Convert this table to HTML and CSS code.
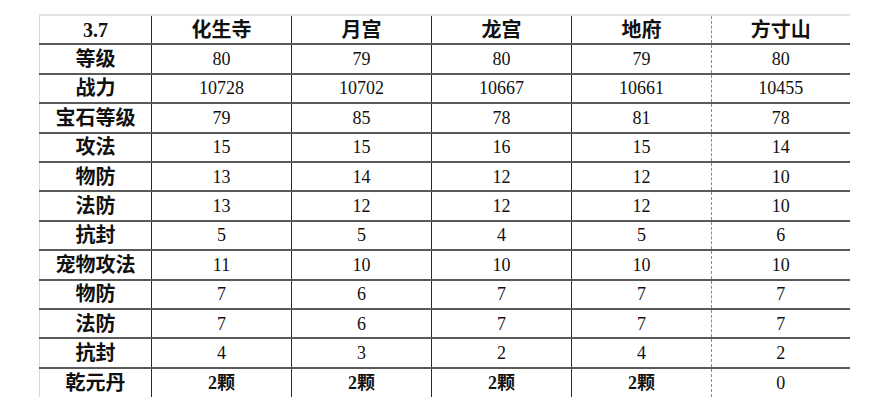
FILE: index.html
```html
<!DOCTYPE html>
<html lang="zh-CN">
<head>
<meta charset="utf-8">
<title>3.7</title>
<link rel="stylesheet" href="styles.css">
</head>
<body>
<table class="stats">
  <colgroup>
    <col class="c-label"><col class="c-val"><col class="c-val"><col class="c-val"><col class="c-val"><col class="c-last">
  </colgroup>
  <thead>
    <tr class="head"><th>3.7</th><th>化生寺</th><th>月宫</th><th>龙宫</th><th>地府</th><th class="last">方寸山</th></tr>
  </thead>
  <tbody>
    <tr><th>等级</th><td>80</td><td>79</td><td>80</td><td>79</td><td class="last">80</td></tr>
    <tr><th>战力</th><td>10728</td><td>10702</td><td>10667</td><td>10661</td><td class="last">10455</td></tr>
    <tr><th>宝石等级</th><td>79</td><td>85</td><td>78</td><td>81</td><td class="last">78</td></tr>
    <tr><th>攻法</th><td>15</td><td>15</td><td>16</td><td>15</td><td class="last">14</td></tr>
    <tr><th>物防</th><td>13</td><td>14</td><td>12</td><td>12</td><td class="last">10</td></tr>
    <tr><th>法防</th><td>13</td><td>12</td><td>12</td><td>12</td><td class="last">10</td></tr>
    <tr><th>抗封</th><td>5</td><td>5</td><td>4</td><td>5</td><td class="last">6</td></tr>
    <tr><th>宠物攻法</th><td>11</td><td>10</td><td>10</td><td>10</td><td class="last">10</td></tr>
    <tr><th>物防</th><td>7</td><td>6</td><td>7</td><td>7</td><td class="last">7</td></tr>
    <tr><th>法防</th><td>7</td><td>6</td><td>7</td><td>7</td><td class="last">7</td></tr>
    <tr><th>抗封</th><td>4</td><td>3</td><td>2</td><td>4</td><td class="last">2</td></tr>
    <tr><th>乾元丹</th><td class="cn">2颗</td><td class="cn">2颗</td><td class="cn">2颗</td><td class="cn">2颗</td><td class="last">0</td></tr>
  </tbody>
</table>
</body>
</html>
```

FILE: styles.css
```css
html, body {
  margin: 0;
  padding: 0;
  background: #ffffff;
}

body {
  padding: 14px 0 0 39px;
}

.stats {
  border-collapse: collapse;
  table-layout: fixed;
  width: 810px;
  color: #111;
  font-family: "Liberation Serif", "Noto Sans CJK SC", serif;
}

.c-label { width: 112px; }
.c-val { width: 140px; }
.c-last { width: 138px; }

.stats tr {
  height: 29.4px;
}

.stats th,
.stats td {
  padding: 0;
  text-align: center;
  vertical-align: middle;
  border-top: 2px solid #5a5a5a;
  border-left: 1.5px solid #2a2a2a;
  line-height: 1;
}

.stats thead th {
  border-top: 2px solid #e2e2e2;
}

.stats tr > :first-child {
  border-left: 1.5px solid #d8d8d8;
}

.stats .last {
  border-left: 1px dashed #8a8a8a;
}

.stats th {
  font-family: "Liberation Serif", "Noto Sans CJK SC", serif;
  font-weight: 700;
  font-size: 20px;
}

.stats td {
  font-size: 18px;
  font-weight: 400;
}

.stats td.cn {
  font-weight: 700;
  font-size: 18px;
}
```
